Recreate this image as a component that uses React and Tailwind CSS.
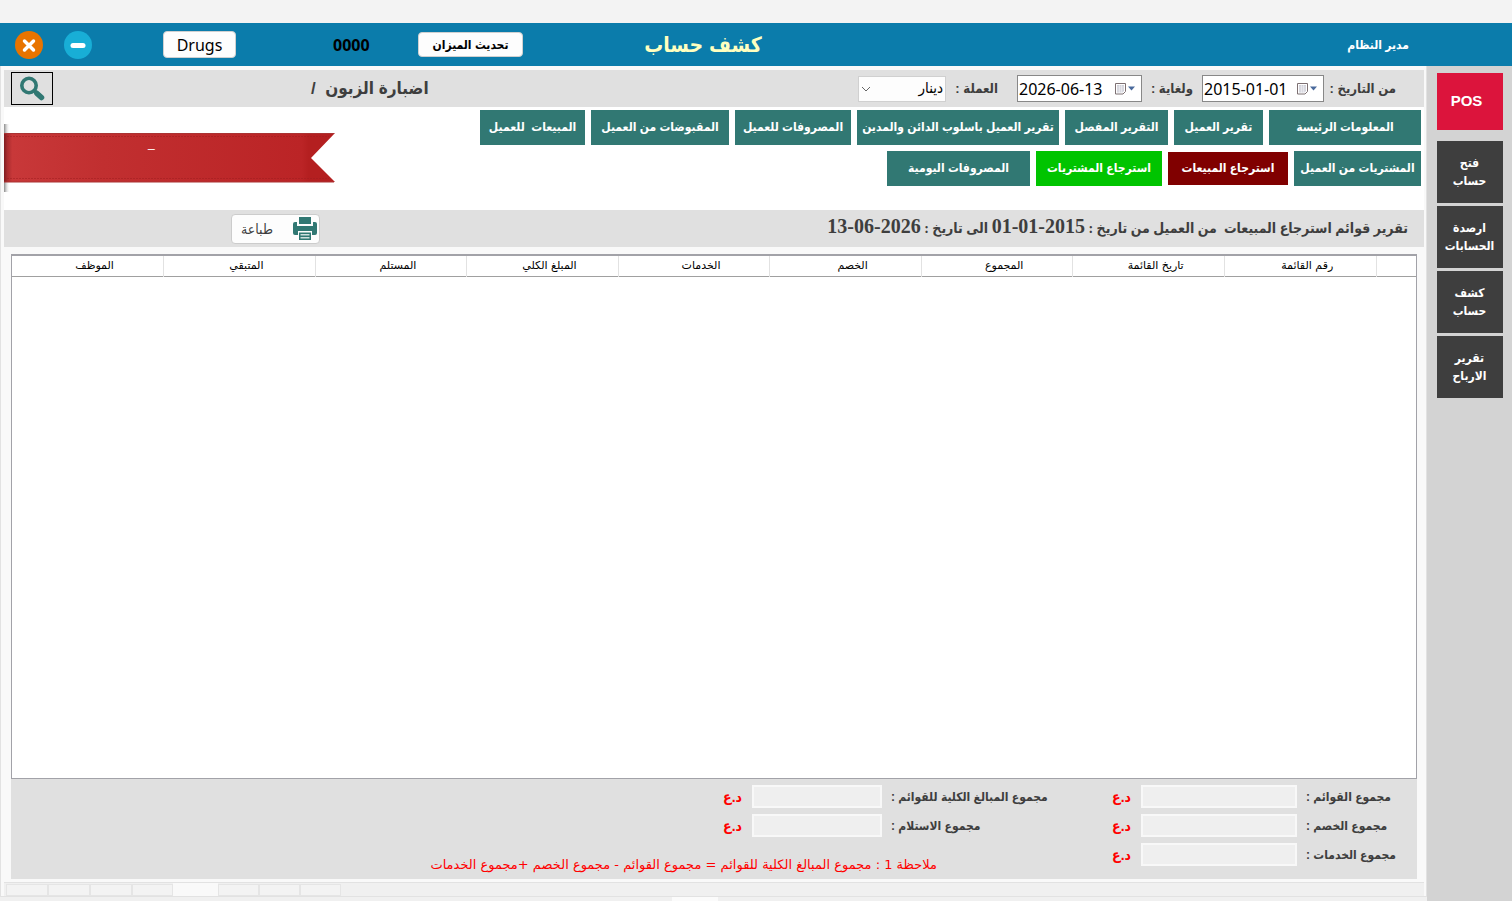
import { useState } from "react";

const SIDE_LINKS = [
  ["فتح", "حساب"],
  ["ارصدة", "الحسابات"],
  ["كشف", "حساب"],
  ["تقرير", "الارباح"],
];

const REPORTS_TOP = [
  { label: "المعلومات الرئيسة", style: "w-[152px]" },
  { label: "تقرير العميل", style: "w-[89px]" },
  { label: "التقرير المفصل", style: "w-[103px]" },
  { label: "تقرير العميل باسلوب الدائن والمدين", style: "w-[202px]" },
  { label: "المصروفات للعميل", style: "w-[116px]" },
  { label: "المقبوضات من العميل", style: "w-[138px]" },
  { label: "المبيعات  للعميل", style: "w-[105px]" },
];

const REPORTS_BOTTOM = [
  { label: "المشتريات من العميل", style: "h-[35px] w-[127px] bg-[#317873]" },
  { label: "استرجاع المبيعات", style: "h-[33px] w-[120px] bg-[#800000]" },
  { label: "استرجاع المشتريات", style: "h-[35px] w-[126px] bg-[#00c400]" },
  { label: "المصروفات اليومية", style: "h-[35px] w-[143px] bg-[#317873]" },
];

const COLUMNS = [
  "رقم القائمة",
  "تاريخ القائمة",
  "المجموع",
  "الخصم",
  "الخدمات",
  "المبلغ الكلي",
  "المستلم",
  "المتبقي",
  "الموظف",
];

function CalendarIcon() {
  return (
    <svg width="22" height="14" viewBox="0 0 22 14">
      <path d="M0.500 1.500h10v8l-2.500 2.500h-7.500z" fill="#fff" stroke="#7d7072" />
      <path d="M2 3h7v6l-1.500 1.500H2z" fill="#cfd0d8" />
      <path d="M2 5h7M2 7h7M2 9h6M4.500 3v8M6.500 3v8" stroke="#f6f6fa" strokeWidth="0.500" />
      <path d="M13 4.500h7l-3.500 4z" fill="#4a6a9c" />
    </svg>
  );
}

function DateField({ id, value, onChange, width }) {
  return (
    <div dir="ltr" className={`flex h-[27px] items-center border border-[#888] bg-white ${width}`}>
      <input
        id={id}
        value={value}
        onChange={(e) => onChange(e.target.value)}
        className="w-0 flex-1 pl-px font-['Noto_Sans',sans-serif] text-base leading-6 font-normal text-black outline-none"
      />
      <button type="button" aria-label="التقويم" className="mr-1">
        <CalendarIcon />
      </button>
    </div>
  );
}

function TotalField({ id, label, labelWidth, inputWidth }) {
  return (
    <div className="flex h-[23px] items-center">
      <label htmlFor={id} className={`text-end text-xs font-bold whitespace-nowrap ${labelWidth}`}>
        {label}
      </label>
      <input id={id} readOnly className={`ms-[9px] h-[23px] border-2 border-[#f8f8f8] bg-[#efefef] ${inputWidth}`} />
      <span className="ms-[10px] w-5 text-sm font-bold whitespace-nowrap text-[#f00]">د.ع</span>
    </div>
  );
}

function Ribbon() {
  return (
    <div dir="ltr" className="relative h-[70px] w-[331px]">
      <svg width="331" height="70" viewBox="0 0 331 70">
        <defs>
          <linearGradient id="ribbon">
            <stop offset="0" stopColor="#7e1c20" />
            <stop offset="0.01" stopColor="#a92c2e" />
            <stop offset="0.025" stopColor="#c83839" />
            <stop offset="0.3" stopColor="#c12f30" />
            <stop offset="0.9" stopColor="#bb2426" />
            <stop offset="0.92" stopColor="#b41f20" />
          </linearGradient>
          <linearGradient id="fold">
            <stop offset="0" stopColor="#888" />
            <stop offset="1" stopColor="#fff" stopOpacity="0" />
          </linearGradient>
        </defs>
        <rect y="1" width="6" height="68" fill="url(#fold)" />
        <path d="M0 10h331l-24 25 24 24H0z" fill="url(#ribbon)" />
        <path d="M0 10.500h330M0 59h330" stroke="#a33" strokeWidth="1" fill="none" />
        <path d="M0 13.500h325M0 55.500h325" stroke="#9e1c1e" strokeDasharray="2 1" strokeOpacity="0.5" fill="none" />
      </svg>
      <span className="absolute top-3 left-36 text-xs text-white">_</span>
    </div>
  );
}

export default function App() {
  const [from, setFrom] = useState("2015-01-01");
  const [to, setTo] = useState("2026-06-13");
  const [currency, setCurrency] = useState("دينار");

  return (
    <div
      dir="rtl"
      className="flex min-h-screen flex-col bg-[#f3f3f3] pt-[23px] font-['Liberation_Sans','DejaVu_Sans_Condensed','DejaVu_Sans',sans-serif] text-[#3e3e3e]"
    >
      <header dir="ltr" className="flex h-[43px] items-center bg-[#0b7cab] pr-[103px] pl-[15px]">
        <button type="button" aria-label="اغلاق">
          <svg width="28" height="28" viewBox="0 0 28 28">
            <circle cx="14" cy="14" r="14" fill="#e87400" />
            <path d="M9.500 10l9 9M18.500 10l-9 9" stroke="#fff" strokeWidth="3.500" strokeLinecap="round" />
          </svg>
        </button>
        <button type="button" aria-label="تصغير" className="ml-[21px]">
          <svg width="28" height="28" viewBox="0 0 28 28">
            <circle cx="14" cy="14" r="14" fill="#18aed6" />
            <path d="M9 14.500h10" stroke="#fff" strokeWidth="5" strokeLinecap="round" />
          </svg>
        </button>
        <button
          type="button"
          className="ml-[71px] h-[27px] w-[73px] rounded-sm border border-[#d0d0d0] bg-[#fdfdfd] font-['Noto_Sans',sans-serif] text-base leading-6 text-black"
        >
          Drugs
        </button>
        <span className="ml-[97px] w-9 font-['Noto_Sans',sans-serif] text-base font-bold text-black">0000</span>
        <button
          type="button"
          className="ml-[49px] h-[25px] w-[105px] rounded-sm border border-[#d0d0d0] bg-[#fdfdfd] text-xs font-bold whitespace-nowrap text-black"
        >
          تحديث الميزان
        </button>
        <h1 className="ml-[120px] w-[120px] text-center text-[21px] font-bold whitespace-nowrap text-[#ffffc0]">كشف حساب</h1>
        <span className="ml-auto text-xs font-bold text-white">مدير النظام</span>
      </header>

      <div className="flex flex-1">
        <aside className="flex w-[85px] flex-col items-center gap-[3px] bg-[#d3d3d3] pt-[7px]">
          <button type="button" className="mb-2 h-[57px] w-[66px] bg-[#dc143c] ps-1.5 text-[15px] font-bold text-white">
            POS
          </button>
          {SIDE_LINKS.map(([first, second]) => (
            <button
              key={first}
              type="button"
              className="h-[62px] w-[66px] bg-[#3e3e3e] text-xs leading-[18px] font-bold text-white"
            >
              {first}
              <br />
              {second}
            </button>
          ))}
        </aside>

        <main className="flex min-w-0 flex-1 flex-col">
          <div className="flex flex-1 flex-col border-x border-[#e2e2e2] bg-[#f9f9f9] ps-0.5 pe-[3px] pt-1">
            <div className="flex h-[37px] items-center bg-[#e0e0e0] ps-7 pe-[7px] text-[13px] font-bold whitespace-nowrap">
              <label htmlFor="from" className="w-[65px]">من التاريخ :</label>
              <div className="ms-[7px]">
                <DateField id="from" value={from} onChange={setFrom} width="w-[122px]" />
              </div>
              <label htmlFor="to" className="ms-[9px] w-[42px]">ولغاية :</label>
              <div className="ms-[9px]">
                <DateField id="to" value={to} onChange={setTo} width="w-[125px]" />
              </div>
              <label htmlFor="currency" className="ms-[19px] w-[42px]">العملة :</label>
              <div className="relative ms-[10px]">
                <select
                  id="currency"
                  value={currency}
                  onChange={(e) => setCurrency(e.target.value)}
                  className="h-[26px] w-[88px] appearance-none border border-[#d0d0d0] bg-[#fdfdfd] ps-0.5 text-[15px] font-normal text-black"
                >
                  <option>دينار</option>
                  <option>دولار</option>
                </select>
                <svg width="10" height="6" viewBox="0 0 10 6" className="pointer-events-none absolute top-2.5 left-[3px]">
                  <path d="M1 1l4 4 4-4" fill="none" stroke="#666" />
                </svg>
              </div>
              <span className="ms-auto text-[17px] whitespace-pre">اضبارة الزبون  /</span>
              <button
                type="button"
                aria-label="بحث"
                className="ms-[258px] flex h-[33px] w-[42px] items-center justify-center border border-black"
              >
                <svg width="26" height="26" viewBox="0 0 26 26" fill="none" stroke="#317873">
                  <circle cx="10" cy="9.500" r="7.200" strokeWidth="3.600" />
                  <path d="M15.500 15l7 6.500" strokeWidth="4" />
                  <path d="M18 17.500l4.500 4" strokeWidth="5.500" strokeLinecap="round" />
                </svg>
              </button>
            </div>

            <div className="flex justify-between bg-white pt-[3px]">
              <div className="flex flex-col gap-1.5 pb-6 ps-[3px]">
                <div className="flex gap-1.5">
                  {REPORTS_TOP.map(({ label, style }) => (
                    <button
                      key={label}
                      type="button"
                      className={`h-[35px] bg-[#317873] pb-0.5 text-xs font-bold whitespace-pre text-white ${style}`}
                    >
                      {label}
                    </button>
                  ))}
                </div>
                <div className="flex items-center gap-1.5">
                  {REPORTS_BOTTOM.map(({ label, style }) => (
                    <button
                      key={label}
                      type="button"
                      className={`pb-0.5 text-xs font-bold whitespace-nowrap text-white ${style}`}
                    >
                      {label}
                    </button>
                  ))}
                </div>
              </div>
              <div className="pt-[13px]">
                <Ribbon />
              </div>
            </div>

            <div className="flex h-[37px] items-center justify-between bg-[#e0e0e0] ps-4 pe-[227px]">
              <h2 className="pb-1.5 font-['Liberation_Serif','DejaVu_Sans_Condensed','DejaVu_Sans',serif] text-sm font-bold whitespace-pre">
                تقرير قوائم استرجاع المبيعات  من العميل من تاريخ : <bdi dir="ltr" className="text-xl">01-01-2015</bdi> الى تاريخ :{" "}
                <bdi dir="ltr" className="text-xl">13-06-2026</bdi>
              </h2>
              <button
                type="button"
                className="flex h-[30px] w-[89px] items-center justify-between rounded-sm border border-[#ccc] bg-[#fdfdfd] ps-0.5 pe-[9px] text-sm"
              >
                <svg width="24" height="24" viewBox="0 0 24 24" fill="#317873">
                  <path d="M6 0h12v7H6z" />
                  <path d="M2 5h2v4h16V5h2q2 0 2 2v9q0 2-2 2h-3v-4H5v4H2q-2 0-2-2V7q0-2 2-2z" />
                  <path d="M6 15.500h12V23H6z" />
                  <path d="M7.500 17h9v1.500h-9zM7.500 20h9v1.500h-9z" fill="#cfe0df" />
                </svg>
                طباعة
              </button>
            </div>

            <div className="mt-[7px] flex flex-1 flex-col pe-[7px] ps-[7px]">
              <div className="flex-1 border border-t-2 border-[#a2a2a8] bg-white">
                <table className="w-full table-fixed border-collapse font-['DejaVu_Sans',sans-serif] text-[11px] leading-[18px] text-black">
                  <thead>
                    <tr className="h-5 border-b border-[#a0a0a0]">
                      <th aria-label="تحديد" className="w-10" />
                      {COLUMNS.map((name) => (
                        <th key={name} className="border-s border-[#e2e2e2] py-0 ps-0 pe-3.5 font-normal">
                          {name}
                        </th>
                      ))}
                    </tr>
                  </thead>
                  <tbody />
                </table>
              </div>

              <div className="flex bg-[#e0e0e0] pt-1.5 pb-[13px] ps-[18px]">
                <div className="flex flex-col gap-1.5">
                  <TotalField id="invoices" label="مجموع القوائم :" labelWidth="w-[93px]" inputWidth="w-[156px]" />
                  <TotalField id="discount" label="مجموع الخصم :" labelWidth="w-[93px]" inputWidth="w-[156px]" />
                  <TotalField id="services" label="مجموع الخدمات :" labelWidth="w-[93px]" inputWidth="w-[156px]" />
                </div>
                <div className="ms-[62px] flex h-[81px] flex-col gap-1.5">
                  <TotalField id="gross" label="مجموع المبالغ الكلية للقوائم :" labelWidth="w-[158px]" inputWidth="w-[130px]" />
                  <TotalField id="received" label="مجموع الاستلام :" labelWidth="w-[158px]" inputWidth="w-[130px]" />
                  <p className="ms-28 mt-3 font-['DejaVu_Sans',sans-serif] text-[13px] leading-5 whitespace-nowrap text-[#f00]">
                    ملاحظة 1 : مجموع المبالغ الكلية للقوائم = مجموع القوائم - مجموع الخصم +مجموع الخدمات
                  </p>
                </div>
              </div>
            </div>

            <div dir="ltr" className="mt-[3px] flex h-3.5 border-t border-[#e2e2e2] bg-[#f0f0f0] pl-0.5">
              <span className="mt-px w-[42px] border border-[#e5e5e5] bg-[#f3f3f3]" />
              <span className="mt-px w-[42px] border border-[#e5e5e5] bg-[#f3f3f3]" />
              <span className="mt-px w-[42px] border border-[#e5e5e5] bg-[#f3f3f3]" />
              <span className="mt-px w-[41px] border border-[#e5e5e5] bg-[#f3f3f3]" />
              <span className="w-[45px] bg-[#f9f9f9]" />
              <span className="mt-px w-[41px] border border-[#e5e5e5] bg-[#f3f3f3]" />
              <span className="mt-px w-[41px] border border-[#e5e5e5] bg-[#f3f3f3]" />
              <span className="mt-px w-[41px] border border-[#e5e5e5] bg-[#f3f3f3]" />
            </div>
          </div>
          <div dir="ltr" className="flex h-[5px] border-t border-[#e2e2e2] bg-[#f0f0f0] pl-[672px]">
            <span className="w-[46px] bg-[#fbfbfb]" />
          </div>
        </main>
      </div>
    </div>
  );
}
